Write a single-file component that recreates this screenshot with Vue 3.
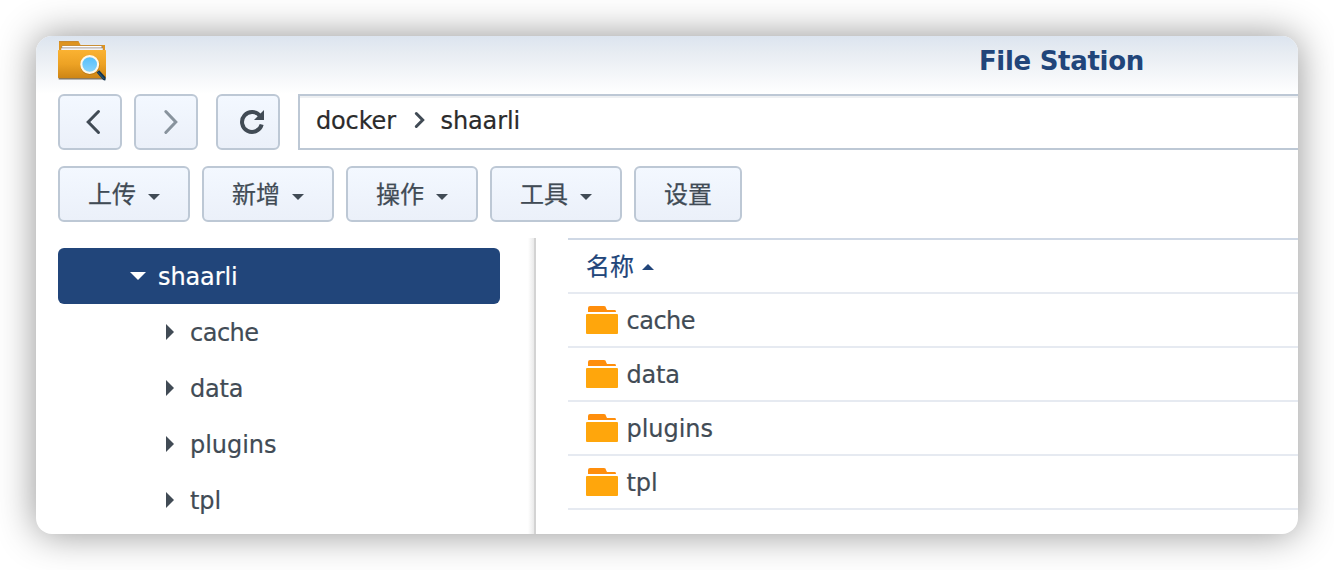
<script setup>
const menus = [
  { label: '上传', menu: true },
  { label: '新增', menu: true },
  { label: '操作', menu: true },
  { label: '工具', menu: true },
  { label: '设置', menu: false },
]
const folders = ['cache', 'data', 'plugins', 'tpl']
</script>

<template>
  <main class="stage">
    <section class="window">
      <header class="titlebar">
        <svg class="app-icon" width="50" height="42" viewBox="0 0 50 42">
          <defs>
            <linearGradient id="front" x1="0" y1="0" x2="0" y2="1">
              <stop offset="0" stop-color="#fab232" />
              <stop offset="0.5" stop-color="#eda224" />
              <stop offset="1" stop-color="#cd8515" />
            </linearGradient>
            <linearGradient id="lens" x1="0" y1="0" x2="0" y2="1">
              <stop offset="0" stop-color="#52bdfb" />
              <stop offset="1" stop-color="#8bd5fb" />
            </linearGradient>
          </defs>
          <path d="M.7 37h46.6v1.6H.7z" fill="#59544f" opacity=".8" />
          <path d="M1 .3h19.5L22.6 4H47v12H1z" fill="#de9420" />
          <path d="M1 .6h19.5" stroke="#bd791b" stroke-width=".7" />
          <path d="M4 4.8h40l1.4 4.4H3z" fill="#8f8178" />
          <path d="M4.2 5h39.3v1.5H4.2z" fill="#fff" />
          <path d="M3.2 7.2h41.6v1.8H3.2z" fill="#f1f1f3" />
          <path d="M0 9.6q0-.6.6-.6h46.8q.6 0 .6.6v27q0 .7-.7.7H.7q-.7 0-.7-.7z" fill="url(#front)" />
          <path d="M38.6 31.6l2.6-2.4 6.2 6.8q.6 1.6-.1 3.4-1 .3-2-.4z" fill="#15344d" />
          <path d="M40 31.2l6 6.6" stroke="#28658a" stroke-width="1" />
          <circle cx="32" cy="24.4" r="9.7" fill="#a8690f" opacity=".5" />
          <circle cx="31.7" cy="23.5" r="8.4" fill="url(#lens)" stroke="#fff8e7" stroke-width="2.1" />
        </svg>
        <h1>File Station</h1>
      </header>

      <nav class="navigation">
        <button class="btn square" aria-label="Back">
          <svg width="16" height="26" viewBox="0 0 16 26"><path d="M13.5 2.5L3.2 13l10.3 10.5" fill="none" stroke="#414b55" stroke-width="3" stroke-linecap="round" /></svg>
        </button>
        <button class="btn square" aria-label="Forward">
          <svg width="18" height="26" viewBox="0 0 18 26"><path d="M4.8 2.5l10 10.5-10 10.5" fill="none" stroke="#88939d" stroke-width="3" stroke-linecap="round" /></svg>
        </button>
        <button class="btn square reload" aria-label="Refresh">
          <svg width="26" height="26" viewBox="0 0 26 26">
            <path d="M21.2 7.2A10 10 0 1 0 22.7 15.6" fill="none" stroke="#414b55" stroke-width="4" />
            <path d="M25 1v10H15z" fill="#414b55" />
          </svg>
        </button>
        <div class="path">
          <span class="txt docker">docker</span>
          <svg class="crumb" width="12" height="18" viewBox="0 0 12 18"><path d="M2.3 2.5L8.7 9l-6.4 6.5" fill="none" stroke="#414b55" stroke-width="3" stroke-linecap="round" /></svg>
          <span class="txt shaarli">shaarli</span>
        </div>
      </nav>

      <div class="toolbar">
        <button v-for="item in menus" :key="item.label" class="btn" :class="{ dropdown: item.menu }">
          <span class="label">{{ item.label }}</span>
          <svg v-if="item.menu" class="caret" width="12" height="6" viewBox="0 0 12 6"><path d="M0 0h12L6 6z" fill="#414b55" /></svg>
        </button>
      </div>

      <div class="body">
        <aside class="tree">
          <div class="node root">
            <svg width="16" height="8" viewBox="0 0 16 8"><path d="M0 0h16L8 8z" fill="#fff" /></svg>
            <span class="txt">shaarli</span>
          </div>
          <div v-for="name in folders" :key="name" class="node child">
            <svg width="8" height="16" viewBox="0 0 8 16"><path d="M0 0v16l8-8z" fill="#414b55" /></svg>
            <span class="txt" :class="name">{{ name }}</span>
          </div>
        </aside>
        <div class="divider"></div>
        <section class="list">
          <div class="head">
            <span class="txt">名称</span>
            <svg width="12" height="6" viewBox="0 0 12 6"><path d="M0 6h12L6 0z" fill="#21457a" /></svg>
          </div>
          <div v-for="name in folders" :key="name" class="row">
            <svg width="32" height="28" viewBox="0 0 32 28">
              <path d="M2 6V2q0-2 2-2h14q2 0 2 2l1 2h8q1 0 1 2z" fill="#ff8e0c" />
              <rect y="8" width="32" height="20" rx="1" fill="#ffa60c" />
            </svg>
            <span class="txt" :class="name">{{ name }}</span>
          </div>
        </section>
      </div>
    </section>
  </main>
</template>

<style>
body { margin: 0; background: #fff; overflow: hidden; }
</style>

<style scoped>
* { box-sizing: border-box; }
.stage {
  width: 1334px; height: 570px; padding: 36px; overflow: hidden;
  font: 24px/30px Verdana, "DejaVu Sans", "Noto Sans CJK SC", sans-serif;
  color: #414b55;
}
svg { display: block; flex: none; }
.window {
  width: 1262px; height: 498px; border-radius: 16px; overflow: hidden;
  background: #fff; box-shadow: 0 0 38px rgba(0, 0, 0, .43);
}
.titlebar {
  height: 58px; padding: 5px 154px 0 22px; display: flex; justify-content: space-between;
  background: linear-gradient(#dce4ef, #e7ecf2 28%, #fff);
}
h1 { margin: 4px 0 0; font-size: 26px; line-height: 32px; color: #21457a; letter-spacing: -.3px; }
.navigation { display: flex; height: 56px; padding-left: 22px; gap: 12px; }
.btn {
  display: flex; align-items: center; height: 56px; padding: 0 28px; margin: 0;
  border: 2px solid #bdc8d5; border-radius: 6px; font: inherit; color: #414b55;
  background: linear-gradient(#f3f8ff, #ebf0f9); font-family: "Noto Sans CJK SC", sans-serif;
}
.square { width: 64px; padding: 0 0 0 25px; }
.square.reload { margin-left: 6px; padding-left: 21px; }
.path {
  flex: 1; display: flex; align-items: center; margin-left: 6px; padding: 0 0 4px 16px;
  border: 2px solid #bdc8d5; border-right: 0; color: #2b2b2b;
  box-shadow: inset 0 2px #eef0f2;
}
.crumb { margin: 0 14px 0 17px; }
.txt { padding-top: 2px; letter-spacing: -.1px; -webkit-text-stroke: .2px currentColor; }
.label { padding-bottom: 2px; -webkit-text-stroke: .25px currentColor; }
.docker { width: 81px; letter-spacing: -.15px; }
.shaarli { padding-left: .5px; }
.toolbar { display: flex; gap: 12px; margin-top: 16px; padding-left: 22px; }
.dropdown { width: 132px; }
.caret { margin: 6px 0 0 12px; }
.body { display: flex; height: 296px; margin-top: 16px; }
.tree { width: 464px; padding: 10px 0 0 22px; }
.node { display: flex; align-items: center; width: 442px; height: 56px; }
.root { padding-left: 72px; gap: 12px; border-radius: 6px; background: #21457a; color: #fff; }
.child { padding-left: 108px; gap: 16px; }
.divider {
  width: 8px; margin-left: 28px; border-right: 2px solid #d3d3d3;
  background: linear-gradient(90deg, #fff, #e9e9e9);
}
.list { flex: 1; margin-left: 32px; }
.head {
  display: flex; align-items: center; height: 56px; padding-left: 18px; gap: 8px;
  border-top: 2px solid #cfd8e5; border-bottom: 2px solid #e6eaf1; color: #21457a;
}
.head svg { margin-top: 1px; }
.row { display: flex; align-items: center; height: 54px; padding-left: 18px; gap: 8.5px; border-bottom: 2px solid #e6eaf1; }
.txt.cache { letter-spacing: -.5px; }
.txt.data { letter-spacing: -.2px; }
.txt.plugins { letter-spacing: -.05px; }
</style>
